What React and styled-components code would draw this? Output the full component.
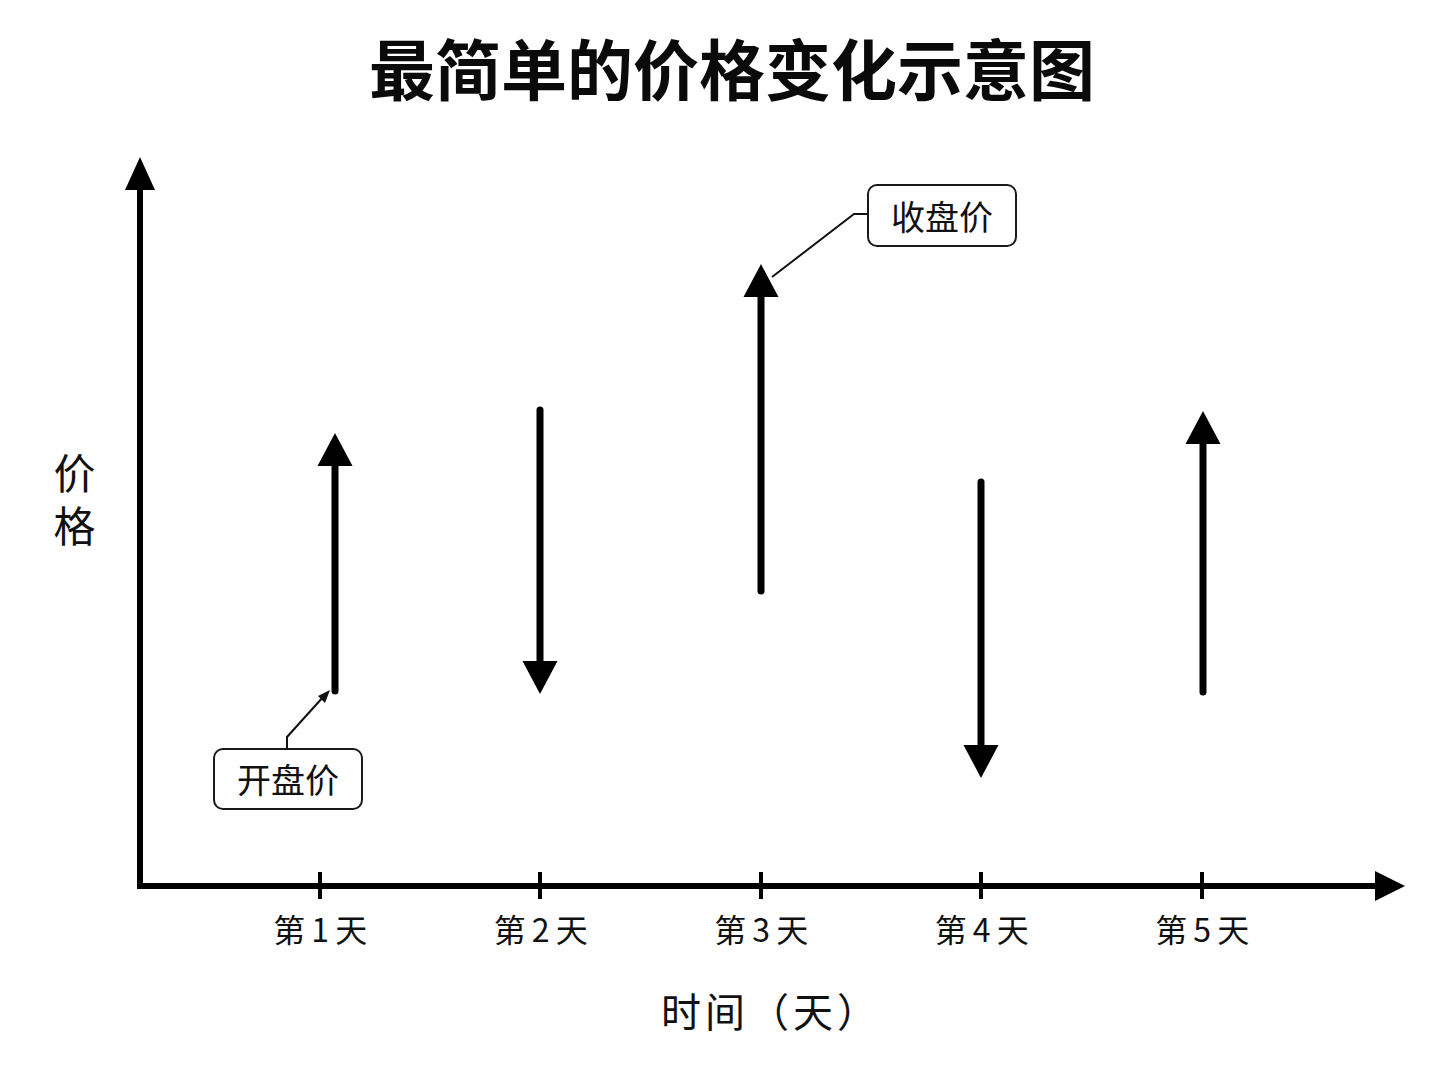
import React from "react";
import styled, { createGlobalStyle } from "styled-components";

const Global = createGlobalStyle`
  html, body { margin: 0; padding: 0; background: #ffffff; }
`;

const Page = styled.div`
  width: 1448px;
  height: 1086px;
  background: #ffffff;
  display: flex;
  flex-direction: column;
  font-family: "Noto Sans CJK SC", "Noto Sans", sans-serif;
  color: #111111;
  overflow: hidden;
`;

const Title = styled.h1`
  margin: 0;
  padding: 33px 0 31px 16px;
  font-size: 66px;
  line-height: 66px;
  font-weight: 700;
  text-align: center;
  color: #0a0a0a;
`;

const ChartRow = styled.div`
  position: relative;
  display: flex;
  height: 780px;
`;

const YLabel = styled.div`
  box-sizing: border-box;
  width: 110px;
  padding: 322px 0 0 53px;
`;

const YText = styled.span`
  display: block;
  writing-mode: vertical-rl;
  text-orientation: upright;
  font-size: 42px;
  line-height: 42px;
  letter-spacing: 11px;
`;

const Plot = styled.svg`
  display: block;
  flex: 0 0 auto;
`;

const Callout = styled.div`
  position: absolute;
  left: ${(p) => p.$left}px;
  top: ${(p) => p.$top}px;
  box-sizing: border-box;
  width: 150px;
  height: ${(p) => p.$h}px;
  border: 2px solid #1a1a1a;
  border-radius: 10px;
  background: #ffffff;
  display: flex;
  align-items: center;
  justify-content: center;
  font-size: 34px;
  line-height: 1;
  color: #111111;
`;

const TickRow = styled.div`
  display: grid;
  grid-template-columns: repeat(5, 220.5px);
  padding-left: 210px;
  height: 40px;
  margin-top: -2px;
  font-size: 32px;
  line-height: 40px;
`;

const TickLabel = styled.div`
  text-align: center;
  white-space: nowrap;
`;

const Num = styled.span`
  padding: 0 6px;
`;

const XTitle = styled.div`
  margin-top: 42px;
  padding-left: 94px;
  font-size: 40px;
  line-height: 40px;
  letter-spacing: 4px;
  text-align: center;
`;

const ticks = [320, 540, 761, 981, 1202];

const bars = [
  { x: 335, from: 691, tip: 433 },
  { x: 540, from: 410, tip: 694 },
  { x: 761, from: 591, tip: 264 },
  { x: 981, from: 482, tip: 778 },
  { x: 1203, from: 692, tip: 411 },
];

function Bar({ x, from, tip }) {
  const up = tip < from;
  const head = 33;
  const half = 17.5;
  const base = up ? tip + head : tip - head;
  return (
    <g>
      <line x1={x} y1={from} x2={x} y2={base} stroke="#000" strokeWidth="7" strokeLinecap="round" />
      <polygon points={`${x},${tip} ${x - half},${base} ${x + half},${base}`} fill="#000" />
    </g>
  );
}

export default function App() {
  return (
    <>
      <Global />
      <Page>
        <Title>最简单的价格变化示意图</Title>
        <ChartRow>
          <YLabel>
            <YText>价格</YText>
          </YLabel>
          <Plot width="1338" height="780" viewBox="110 130 1338 780">
            <polyline
              points="140,186 140,886 1378,886"
              fill="none"
              stroke="#000"
              strokeWidth="6"
              strokeLinejoin="miter"
            />
            <polygon points="140,157 125,190 155,190" fill="#000" />
            <polygon points="1405,886 1375,871 1375,901" fill="#000" />
            {ticks.map((t) => (
              <line key={t} x1={t} y1="872" x2={t} y2="899" stroke="#000" strokeWidth="4" />
            ))}
            {bars.map((b) => (
              <Bar key={b.x} {...b} />
            ))}
            <polyline points="772,277 854,214 868,214" fill="none" stroke="#111" strokeWidth="2" />
            <polyline points="287,749 287,737 324,696" fill="none" stroke="#111" strokeWidth="2" />
            <polygon points="330,690 318,696 325,703" fill="#111" />
          </Plot>
          <Callout $left={867} $top={54} $h={63}>收盘价</Callout>
          <Callout $left={213} $top={618} $h={62}>开盘价</Callout>
        </ChartRow>
        <TickRow>
          {[1, 2, 3, 4, 5].map((n) => (
            <TickLabel key={n}>
              第<Num>{n}</Num>天
            </TickLabel>
          ))}
        </TickRow>
        <XTitle>时间（天）</XTitle>
      </Page>
    </>
  );
}
